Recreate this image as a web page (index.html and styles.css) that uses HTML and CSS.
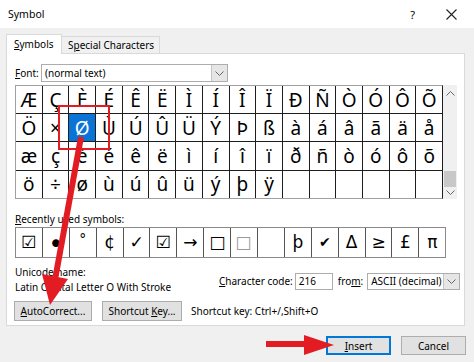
FILE: index.html
```html
<!DOCTYPE html>
<html>
<head>
    <meta charset="utf-8">
    <title>Symbol</title>
    <link rel="stylesheet" href="styles.css">
</head>
<body>
    <div class="dialog">
        <div class="titlebar">
            <span class="title">Symbol</span>
            <span class="help">?</span>
            <svg class="close" width="11" height="11" viewBox="0 0 11 11">
                <path d="M0.5 0.5 L10.5 10.5 M10.5 0.5 L0.5 10.5" stroke="#222" stroke-width="1.1" fill="none"/>
            </svg>
        </div>

        <div class="content">
            <div class="tabs">
                <div class="tab active"><u>S</u>ymbols</div>
                <div class="tab">S<u>p</u>ecial Characters</div>
            </div>

            <div class="panel">
                <div class="font-row">
                    <span class="label"><u>F</u>ont:</span>
                    <div class="combo">
                        <span class="combo-text">(normal text)</span>
                        <span class="drop">
                            <svg width="9" height="5" viewBox="0 0 9 5"><path d="M0.5 0.5 L4.5 4.5 L8.5 0.5" stroke="#666" fill="none"/></svg>
                        </span>
                    </div>
                </div>

                <div class="grid-wrap">
                    <div class="grid">
                        <div class="cell">Æ</div><div class="cell">Ç</div><div class="cell">È</div><div class="cell">É</div>
                        <div class="cell">Ê</div><div class="cell">Ë</div><div class="cell">Ì</div><div class="cell">Í</div>
                        <div class="cell">Î</div><div class="cell">Ï</div><div class="cell">Ð</div><div class="cell">Ñ</div>
                        <div class="cell">Ò</div><div class="cell">Ó</div><div class="cell">Ô</div><div class="cell">Õ</div>

                        <div class="cell">Ö</div><div class="cell">×</div><div class="cell selected">Ø</div><div class="cell">Ù</div>
                        <div class="cell">Ú</div><div class="cell">Û</div><div class="cell">Ü</div><div class="cell">Ý</div>
                        <div class="cell">Þ</div><div class="cell">ß</div><div class="cell">à</div><div class="cell">á</div>
                        <div class="cell">â</div><div class="cell">ã</div><div class="cell">ä</div><div class="cell">å</div>

                        <div class="cell">æ</div><div class="cell">ç</div><div class="cell">è</div><div class="cell">é</div>
                        <div class="cell">ê</div><div class="cell">ë</div><div class="cell">ì</div><div class="cell">í</div>
                        <div class="cell">î</div><div class="cell">ï</div><div class="cell">ð</div><div class="cell">ñ</div>
                        <div class="cell">ò</div><div class="cell">ó</div><div class="cell">ô</div><div class="cell">õ</div>

                        <div class="cell">ö</div><div class="cell">÷</div><div class="cell">ø</div><div class="cell">ù</div>
                        <div class="cell">ú</div><div class="cell">û</div><div class="cell">ü</div><div class="cell">ý</div>
                        <div class="cell">þ</div><div class="cell">ÿ</div><div class="cell"></div><div class="cell"></div>
                        <div class="cell"></div><div class="cell"></div><div class="cell"></div><div class="cell"></div>
                    </div>
                    <div class="scrollbar">
                        <svg class="arrow" width="9" height="5" viewBox="0 0 9 5"><path d="M0.5 4.5 L4.5 0.5 L8.5 4.5" stroke="#666" fill="none"/></svg>
                        <div class="track"><div class="thumb"></div></div>
                        <svg class="arrow" width="9" height="5" viewBox="0 0 9 5"><path d="M0.5 0.5 L4.5 4.5 L8.5 0.5" stroke="#666" fill="none"/></svg>
                    </div>
                </div>

                <div class="recent-label"><u>R</u>ecently used symbols:</div>
                <div class="recent">
                    <div class="rcell">☑</div>
                    <div class="rcell dot">•</div>
                    <div class="rcell deg">°</div>
                    <div class="rcell">¢</div>
                    <div class="rcell">✓</div>
                    <div class="rcell">☑</div>
                    <div class="rcell">→</div>
                    <div class="rcell">□</div>
                    <div class="rcell faint">□</div>
                    <div class="rcell"></div>
                    <div class="rcell">þ</div>
                    <div class="rcell small">✔</div>
                    <div class="rcell">Δ</div>
                    <div class="rcell">≥</div>
                    <div class="rcell">£</div>
                    <div class="rcell">π</div>
                </div>

                <div class="info-row">
                    <div class="name-col">
                        <div>Unicode name:</div>
                        <div>Latin Capital Letter O With Stroke</div>
                    </div>
                    <div class="code-col">
                        <span class="label"><u>C</u>haracter code:</span>
                        <div class="input">216</div>
                        <span class="label from">fro<u>m</u>:</span>
                        <div class="select">
                            <span class="combo-text">ASCII (decimal)</span>
                            <span class="drop">
                                <svg width="9" height="5" viewBox="0 0 9 5"><path d="M0.5 0.5 L4.5 4.5 L8.5 0.5" stroke="#666" fill="none"/></svg>
                            </span>
                        </div>
                    </div>
                </div>

                <div class="btn-row">
                    <button class="btn auto"><u>A</u>utoCorrect...</button>
                    <button class="btn shortcut">Shortcut <u>K</u>ey...</button>
                    <span class="shortcut-text">Shortcut key: Ctrl+/,Shift+O</span>
                </div>
            </div>

            <div class="footer">
                <button class="btn primary"><u>I</u>nsert</button>
                <button class="btn">Cancel</button>
            </div>
        </div>

        <!-- red annotation marks over the dialog -->
        <svg class="marks" width="474" height="362" viewBox="0 0 474 362">
            <rect x="59" y="106" width="50" height="43" fill="none" stroke="#e31c23" stroke-width="2"/>
            <line x1="81" y1="137" x2="55.5" y2="277" stroke="#e31c23" stroke-width="6"/>
            <polygon points="50,305 68,279 42,274" fill="#e31c23"/>
            <line x1="266" y1="344" x2="306" y2="344" stroke="#e31c23" stroke-width="6"/>
            <polygon points="304,335 334,345 304,355" fill="#e31c23"/>
        </svg>
    </div>
</body>
</html>
```

FILE: styles.css
```css
body {
    margin: 0;
    font-family: 'Noto Sans', sans-serif;
    font-size: 10px;
    color: #000;
}

u {
    text-underline-offset: 1px;
}

.dialog {
    width: 474px;
    height: 362px;
    background: #f0f0f0;
    position: relative;
    overflow: hidden;
}

.titlebar {
    height: 28px;
    background: #fff;
    display: flex;
    align-items: center;
}

.title {
    margin-left: 8px;
    flex: 1;
    font-size: 10.5px;
}

.help {
    font-size: 11px;
    margin-right: 31px;
}

.close {
    margin-right: 17px;
}

.content {
    padding: 0 9px 0 6px;
}

.tabs {
    display: flex;
    align-items: flex-end;
    height: 19px;
    margin-top: 6px;
    position: relative;
    z-index: 1;
}

.tab {
    height: 16px;
    line-height: 16px;
    padding: 0 5px 0 6px;
    border: 1px solid #d9d9d9;
    border-bottom: none;
    border-left: none;
    background: #f0f0f0;
    white-space: nowrap;
}

.tab.active {
    height: 19px;
    line-height: 18px;
    width: 40px;
    padding: 0 7px 0 7px;
    border-left: 1px solid #d9d9d9;
    background: #fff;
    margin-bottom: -1px;
}

.panel {
    background: #fff;
    border: 1px solid #d9d9d9;
    height: 271px;
    padding: 0 0 0 8px;
}

.label {
    white-space: nowrap;
    flex-shrink: 0;
}

.font-row {
    display: flex;
    align-items: center;
    margin-top: 10px;
    height: 18px;
}

.font-row .label {
    width: 26px;
}

.combo,
.select {
    display: flex;
    align-items: center;
    border: 1px solid #adadad;
    background: #fff;
    box-sizing: border-box;
    flex-shrink: 0;
}

.combo {
    width: 187px;
    height: 18px;
}

.combo-text {
    flex: 1;
    padding-left: 3px;
    white-space: nowrap;
}

.drop {
    width: 15px;
    height: 100%;
    background: #e6e6e6;
    border-left: 1px solid #c4c4c4;
    display: flex;
    align-items: center;
    justify-content: center;
}

.grid-wrap {
    display: flex;
    margin-top: 3px;
}

.grid {
    display: grid;
    grid-template-columns: repeat(16, 25.7px);
    grid-template-rows: repeat(4, 27.2px);
    gap: 1px;
    background: #1e1e1e;
    border: 1px solid #a0a0a0;
    border-right-color: #1e1e1e;
}

.cell {
    background: #fff;
    font-size: 19px;
    display: flex;
    align-items: center;
    justify-content: center;
}

.cell.selected {
    background: #0a74d6;
    color: #fff;
}

.scrollbar {
    width: 14px;
    background: #f0f0f0;
    display: flex;
    flex-direction: column;
    align-items: center;
    padding: 6px 0 4px;
    box-sizing: border-box;
}

.track {
    flex: 1;
    width: 100%;
    display: flex;
    flex-direction: column;
    justify-content: flex-end;
    padding-bottom: 3px;
}

.thumb {
    height: 16px;
    margin: 0 1px;
    background: #c8c8c8;
}

.recent-label {
    margin-top: 12px;
    line-height: 16px;
}

.recent {
    display: grid;
    grid-template-columns: repeat(16, 25.9px);
    grid-template-rows: 29px;
    gap: 1px;
    width: max-content;
    background: #555;
    border: 1px solid #8a8a8a;
}

.rcell {
    background: #fff;
    font-family: 'DejaVu Sans', sans-serif;
    font-size: 17px;
    display: flex;
    align-items: center;
    justify-content: center;
}

.rcell.dot {
    font-size: 26px;
    padding-top: 4px;
}

.rcell.deg {
    align-items: flex-start;
    padding-top: 3px;
    font-size: 14px;
}

.rcell.faint {
    color: #9a9a9a;
    justify-content: flex-start;
    padding-left: 4px;
}

.rcell.small {
    font-size: 14px;
}

.info-row {
    display: flex;
    margin-top: 7px;
}

.name-col {
    width: 204px;
    flex-shrink: 0;
    line-height: 15px;
}

.code-col {
    display: flex;
    align-items: center;
    margin-top: 8px;
    height: 17px;
}

.input {
    width: 38px;
    height: 17px;
    box-sizing: border-box;
    flex-shrink: 0;
    border: 1px solid #adadad;
    padding-left: 3px;
    line-height: 15px;
    margin-left: 2px;
}

.from {
    margin-left: 5px;
}

.select {
    width: 93px;
    height: 17px;
    margin-left: 4px;
}

.btn-row {
    display: flex;
    align-items: center;
    margin-top: 6px;
    margin-left: -1px;
}

.btn {
    font-family: 'Noto Sans', sans-serif;
    font-size: 10px;
    height: 20px;
    padding: 0;
    background: #e1e1e1;
    border: 1px solid #adadad;
    color: #000;
}

.btn.auto {
    width: 78px;
}

.btn.shortcut {
    width: 80px;
    margin-left: 10px;
}

.shortcut-text {
    margin-left: 9px;
}

.footer {
    display: flex;
    justify-content: flex-end;
    gap: 10px;
    margin-top: 10px;
    margin-right: -1px;
}

.footer .btn {
    width: 65px;
    height: 19px;
}

.btn.primary {
    border: 2px solid #0078d7;
}

.marks {
    position: absolute;
    top: 0;
    left: 0;
    pointer-events: none;
}
```
